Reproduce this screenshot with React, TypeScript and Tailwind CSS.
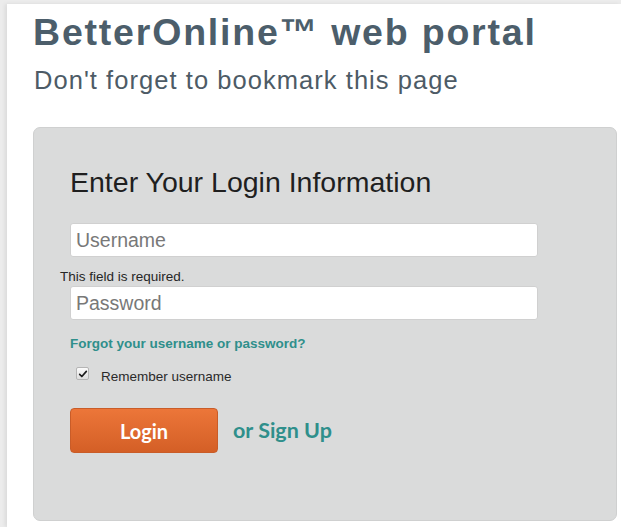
import React from 'react';

const App: React.FC = () => {
  return (
    <div className="min-h-screen bg-[#ececec] pt-[4px] pl-[7px] font-['Liberation_Sans',Arial,sans-serif]">
      <div className="min-h-[523px] bg-white pl-[26px] pr-[4px] pb-[6px] shadow-[-2px_0_4px_rgba(0,0,0,0.08)]">
        <h1 className="pt-[7px] text-[37.5px] leading-[42px] font-bold text-[#4c5e6b] tracking-[1.8px]">
          BetterOnline™ web portal
        </h1>
        <p className="mt-[12px] pl-[1px] text-[25.5px] leading-[30px] text-[#4d5b66] tracking-[1.05px]">
          Don't forget to bookmark this page
        </p>

        <div className="mt-[32px] h-[394px] rounded-[7px] border border-[#cfd0d0] bg-[#dadbdb] pl-[36px] pr-[78px] pt-[37px]">
          <h2 className="text-[28.5px] leading-[34px] text-[#1f1f1f]">Enter Your Login Information</h2>

          <div className="mt-[24px]">
            <input
              type="text"
              placeholder="Username"
              className="block h-[34px] w-full rounded-[3px] border border-[#d0d0d0] bg-white px-[5px] text-[19.5px] text-[#333] placeholder:text-[#787878] outline-none"
            />
            <div className="-ml-[10px] mt-[12px] text-[13.5px] leading-[16px] text-[#262626]">This field is required.</div>
            <input
              type="password"
              placeholder="Password"
              className="mt-[1px] block h-[34px] w-full rounded-[3px] border border-[#d0d0d0] bg-white px-[5px] text-[19.5px] text-[#333] placeholder:text-[#787878] outline-none"
            />
          </div>

          <a href="#" className="mt-[16px] block text-[13.5px] leading-[16px] font-bold text-[#2f8f8b]">
            Forgot your username or password?
          </a>

          <label className="mt-[15px] ml-[6px] flex items-start gap-[12px] text-[13.5px] leading-[16px] text-[#2a2a2a]">
            <span className="flex h-[13px] w-[13px] items-center justify-center rounded-[2px] border border-[#b5b5b5] bg-gradient-to-b from-[#fbfbfb] to-[#dedede]">
              <svg viewBox="0 0 12 12" className="h-[10px] w-[10px]">
                <path d="M2 6.5 L4.6 9 L10 2.8" fill="none" stroke="#1c1c1c" strokeWidth="2" strokeLinecap="round" strokeLinejoin="round" />
              </svg>
            </span>
            <span className="mt-[2px]">Remember username</span>
          </label>

          <div className="mt-[23px] flex items-center gap-[15px] font-['Lato',sans-serif]">
            <button className="h-[45px] w-[148px] rounded-[4px] border border-[#c95c28] bg-gradient-to-b from-[#ec7639] to-[#d45f26] text-[20px] font-bold text-white">
              Login
            </button>
            <a href="#" className="text-[21.5px] font-bold text-[#2f8f8b]">
              or Sign Up
            </a>
          </div>
        </div>
      </div>
    </div>
  );
};

export default App;
